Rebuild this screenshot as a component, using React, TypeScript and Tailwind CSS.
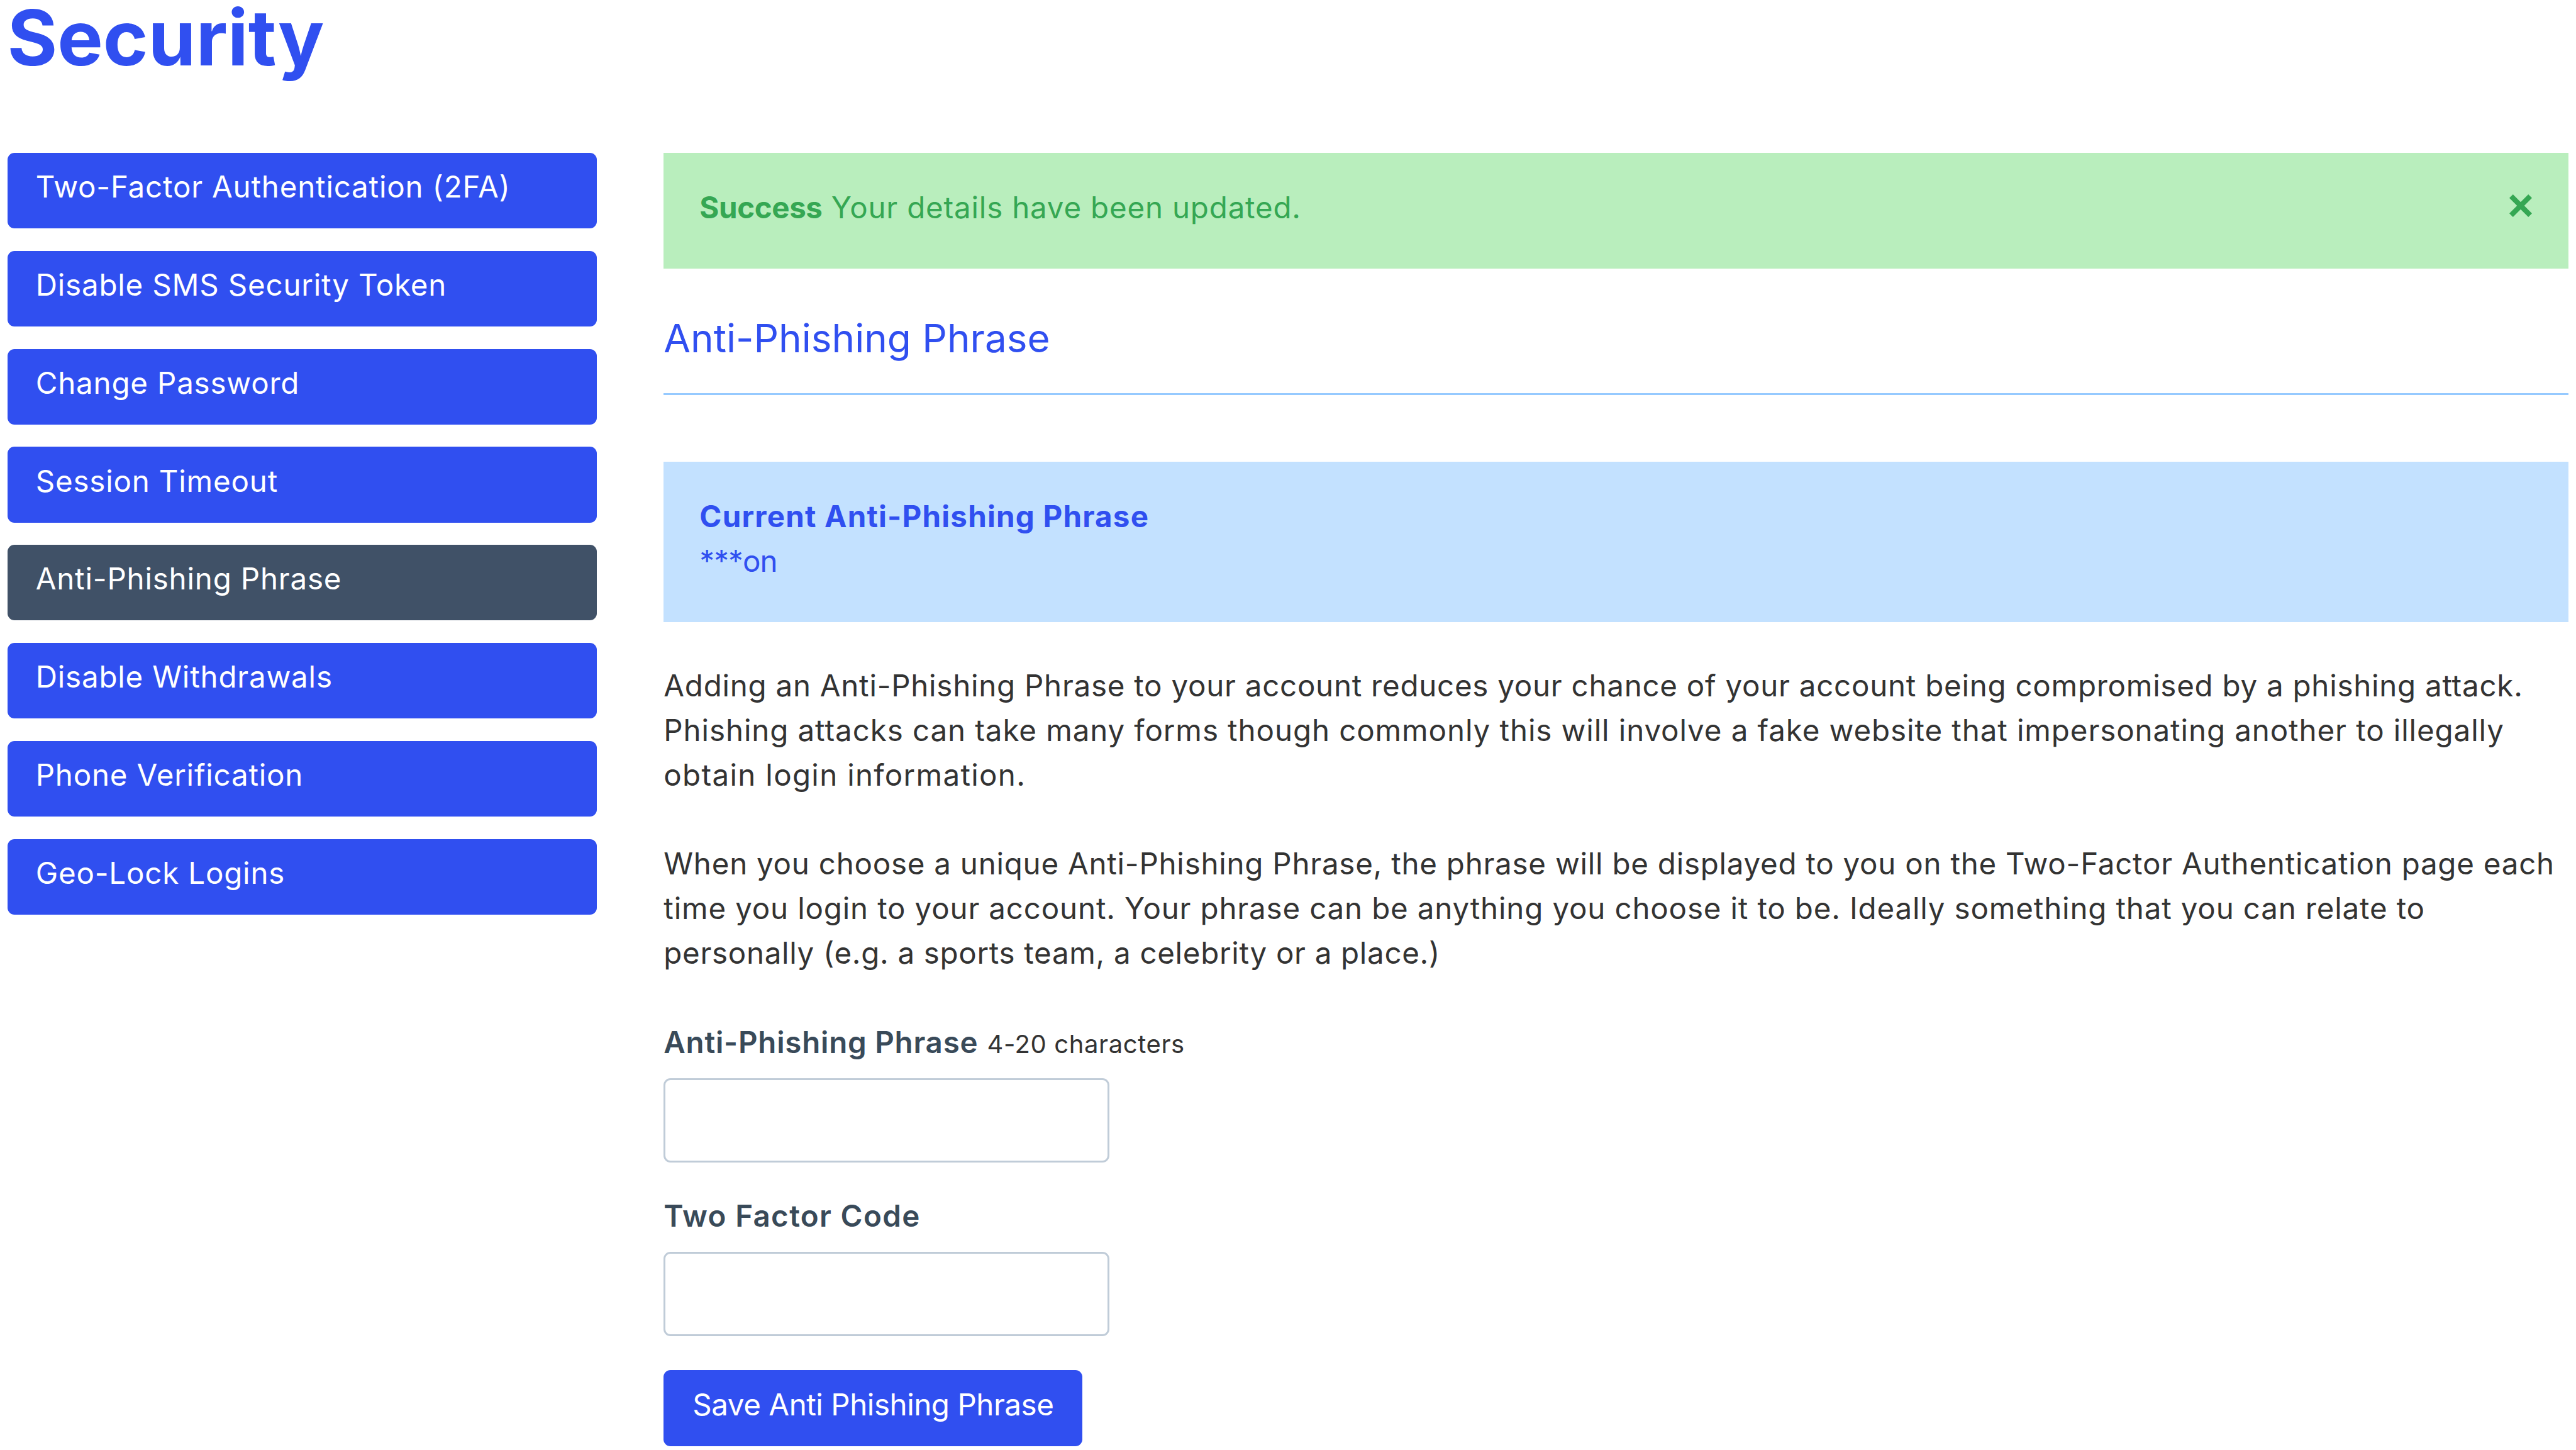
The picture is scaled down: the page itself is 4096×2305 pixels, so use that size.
import { useState } from 'react';

const NAV_ITEMS: string[] = [
  'Two-Factor Authentication (2FA)',
  'Disable SMS Security Token',
  'Change Password',
  'Session Timeout',
  'Anti-Phishing Phrase',
  'Disable Withdrawals',
  'Phone Verification',
  'Geo-Lock Logins',
];

function CloseIcon() {
  return (
    <svg viewBox="0 0 36 36" className="h-9 w-9" fill="none" stroke="currentColor" strokeWidth="8.2">
      <path d="M2.9 2.9L33.1 33.1M33.1 2.9L2.9 33.1" />
    </svg>
  );
}

const inputClass =
  'block h-[134px] w-[708.5px] rounded-[11px] border-[3px] border-[#c0ccd8] bg-white px-8 focus:outline-none';

export default function App() {
  const [active, setActive] = useState<string>('Anti-Phishing Phrase');
  const [phrase, setPhrase] = useState<string>('');
  const [code, setCode] = useState<string>('');

  return (
    <div className="h-[2305px] w-[4096px] overflow-hidden bg-white font-[Inter,sans-serif] text-[47.5px] leading-[70.8px] tracking-[0.8px] text-[#333333]">
      <h1 className="pl-[11.5px] text-[122px] leading-[119px] font-bold tracking-[-0.1px] text-[#304ff0]">Security</h1>

      <div className="mt-[124px] flex pr-[12.4px] pl-[12.3px]">
        <nav className="flex w-[937px] shrink-0 flex-col gap-[35.5px]">
          {NAV_ITEMS.map((item) => (
            <button
              key={item}
              type="button"
              onClick={() => setActive(item)}
              className={`h-[120.3px] rounded-[11px] pt-[19.2px] pb-[30.3px] pl-[44.4px] text-left whitespace-nowrap text-white ${
                item === active ? 'bg-[#405167]' : 'bg-[#304ff0]'
              }`}
            >
              {item}
            </button>
          ))}
        </nav>

        <main className="ml-[106px] flex-1">
          <div className="flex h-[184px] items-start justify-between bg-[#b9eebd] pt-[52.3px] pr-[57.3px] pl-[57px] text-[#35a753]">
            <p>
              <strong className="font-bold tracking-[-0.4px]">Success</strong> Your details have been updated.
            </p>
            <button type="button" aria-label="Close" className="mt-[13.9px]">
              <CloseIcon />
            </button>
          </div>

          <h2 className="mt-[71px] border-b-[3px] border-[#96caff] pb-[47px] text-[62px] leading-[80px] tracking-[0px] text-[#304ff0]">
            Anti-Phishing Phrase
          </h2>

          <div className="mt-[105.5px] h-[255px] bg-[#c3e1ff] pt-[52.3px] pl-[57px] text-[#304ff0]">
            <p className="font-bold tracking-[1.2px]">Current Anti-Phishing Phrase</p>
            <p className="tracking-[-0.9px]">***on</p>
          </div>

          <div className="mt-[66.7px] flex flex-col gap-[70.8px] whitespace-nowrap">
            <p>
              <span className="block tracking-[0.74px]">
                Adding an Anti-Phishing Phrase to your account reduces your chance of your account being compromised by a phishing attack.
              </span>
              <span className="block tracking-[0.9px]">
                Phishing attacks can take many forms though commonly this will involve a fake website that impersonating another to illegally
              </span>
              <span className="block tracking-[1.3px]">obtain login information.</span>
            </p>
            <p>
              <span className="block tracking-[0.75px]">
                When you choose a unique Anti-Phishing Phrase, the phrase will be displayed to you on the Two-Factor Authentication page each
              </span>
              <span className="block tracking-[0.83px]">
                time you login to your account. Your phrase can be anything you choose it to be. Ideally something that you can relate to
              </span>
              <span className="block tracking-[0.68px]">personally (e.g. a sports team, a celebrity or a place.)</span>
            </p>
          </div>

          <form className="mt-[70.8px]" onSubmit={(e) => e.preventDefault()}>
            <label htmlFor="phrase" className="block whitespace-nowrap">
              <span className="font-semibold tracking-[0.75px] text-[#394a59]">Anti-Phishing Phrase</span>{' '}
              <span className="text-[40px] leading-none tracking-[0.6px]">4-20 characters</span>
            </label>
            <input
              id="phrase"
              type="text"
              value={phrase}
              onChange={(e) => setPhrase(e.target.value)}
              className={`mt-[21.4px] ${inputClass}`}
            />

            <label htmlFor="code" className="mt-[50px] block font-semibold tracking-[1.35px] text-[#394a59]">
              Two Factor Code
            </label>
            <input
              id="code"
              type="text"
              value={code}
              onChange={(e) => setCode(e.target.value)}
              className={`mt-[21.2px] ${inputClass}`}
            />

            <button
              type="submit"
              className="mt-[54.5px] block h-[120.5px] w-[665.5px] rounded-[11px] bg-[#304ff0] pt-[19.2px] pb-[30.3px] pl-[46px] text-left tracking-[-0.45px] whitespace-nowrap text-white"
            >
              Save Anti Phishing Phrase
            </button>
          </form>
        </main>
      </div>
    </div>
  );
}
